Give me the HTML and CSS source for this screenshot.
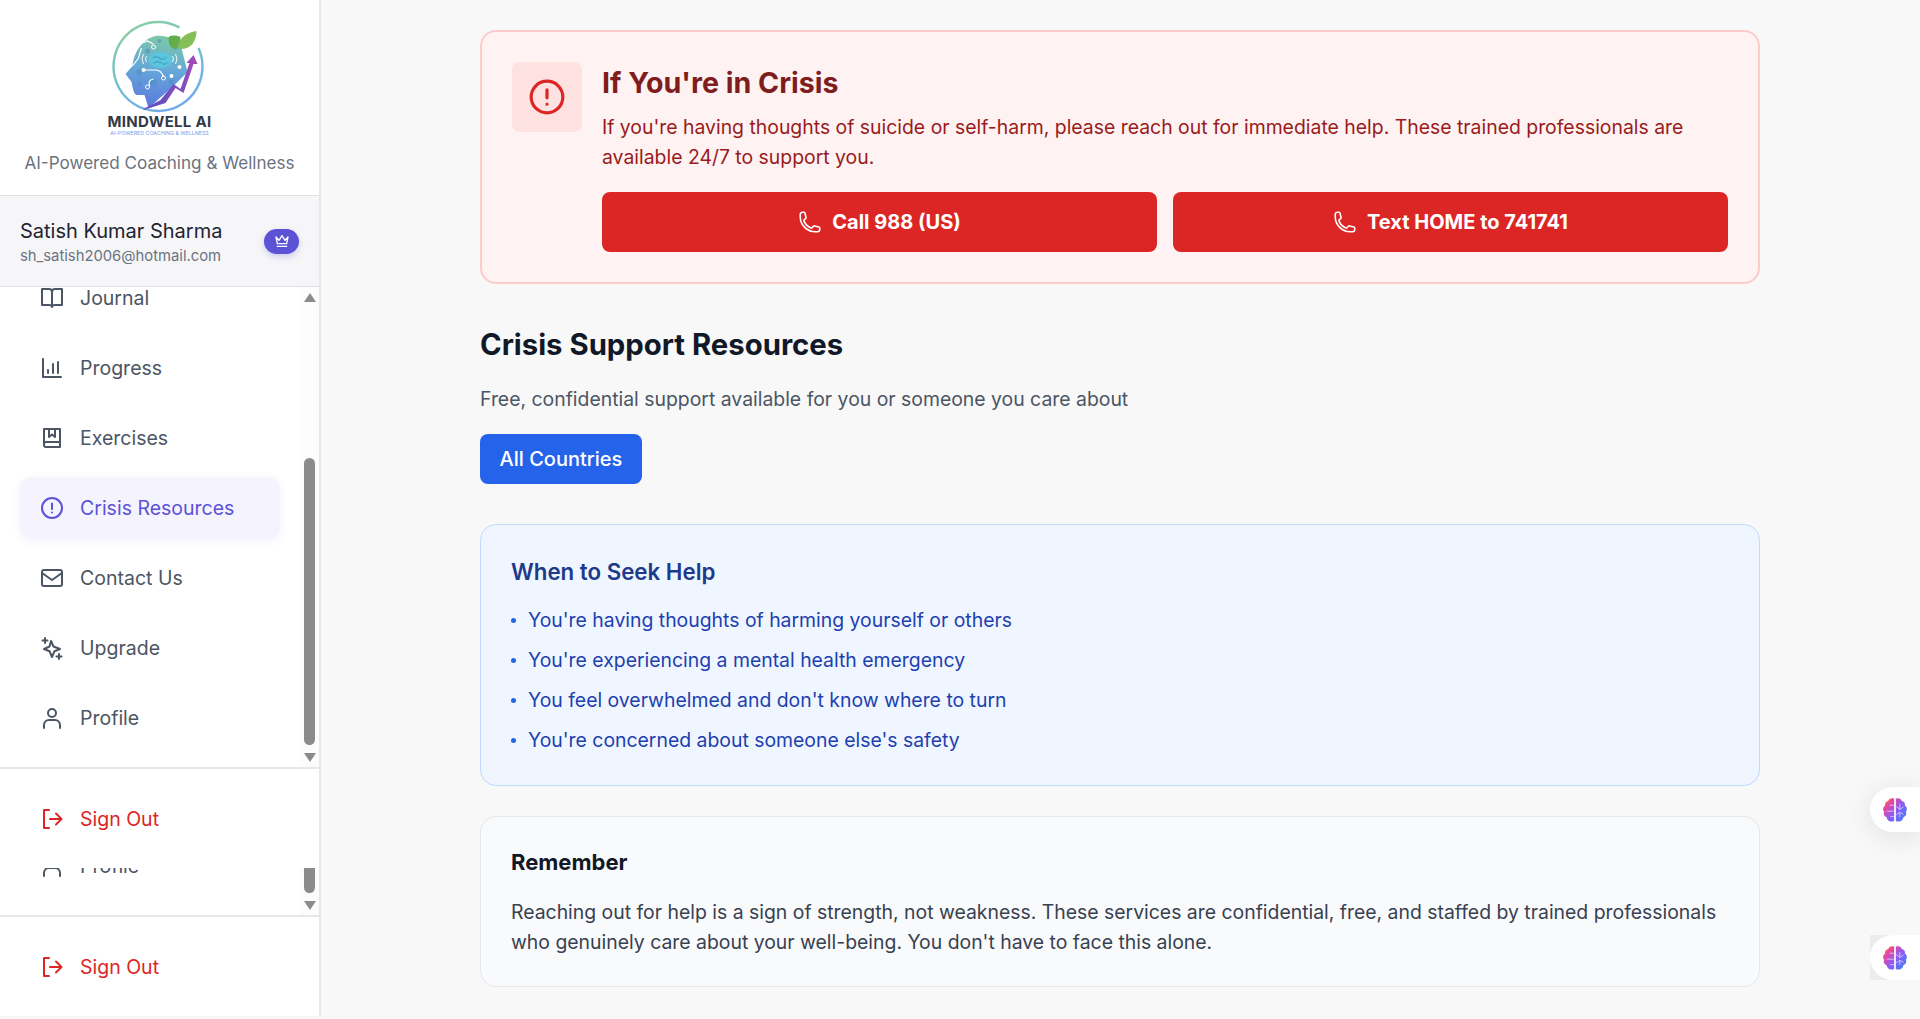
FILE: index.html
```html
<!DOCTYPE html>
<html lang="en">
<head>
<meta charset="utf-8">
<title>Crisis Resources</title>
<link rel="stylesheet" href="styles.css">
</head>
<body>
<div class="app">
  <aside class="sidebar">
    <header class="brand">
      <svg class="logo" viewBox="1.500 0 110 96" width="110" height="96" aria-hidden="true">
        <defs>
          <linearGradient id="ring" x1="0.2" y1="0" x2="0.7" y2="1"><stop offset="0" stop-color="#8fd0a0"/><stop offset="0.5" stop-color="#6fc0d0"/><stop offset="1" stop-color="#70a8ee"/></linearGradient>
          <linearGradient id="head" x1="0.5" y1="0" x2="0.4" y2="1"><stop offset="0" stop-color="#7cc8a8"/><stop offset="0.45" stop-color="#66a8d8"/><stop offset="1" stop-color="#5a78e0"/></linearGradient>
          <linearGradient id="arrow" x1="0" y1="1" x2="1" y2="0"><stop offset="0" stop-color="#5a4fc0"/><stop offset="1" stop-color="#a44bb8"/></linearGradient>
        </defs>
        <path d="M76 7.500A44.500 44.500 0 1 0 95 28" fill="none" stroke="url(#ring)" stroke-width="2.400"/>
        <path d="M52 16C62 15 72 18 78 28L84 52 70 66 45 88 41 75 33 75C30 73 30 70 29 67L28 62 22 54 29 46C30 34 38 19 52 16Z" fill="url(#head)"/>
        <g fill="#4f8cc0" opacity=".55"><circle cx="56" cy="21" r="2"/><circle cx="44" cy="31" r="2.500"/><circle cx="72" cy="28" r="2"/><circle cx="36" cy="52" r="3"/><circle cx="50" cy="62" r="3.500"/><circle cx="68" cy="62" r="2.500"/><circle cx="36" cy="64" r="2.500"/></g>
        <ellipse cx="57" cy="40" rx="12" ry="8" fill="#5cc4dc"/>
        <path d="M49 38q4-3 7 0t7-1M50 43q5-3 8 0t6-1" fill="none" stroke="#2f8fb8" stroke-width="0.8"/>
        <path d="M40 34q-3 5 0 10M43 36q-2 3 0 6M72 34q3 5 0 10M69 36q2 3 0 6" fill="none" stroke="#fff" stroke-width="0.9"/>
        <path d="M38 28l-3 10-6 8M40 50h12q6 0 8 7M46 66q-2-6 4-7M36 24l8-3 6 3" fill="none" stroke="#fff" stroke-width="1.200"/>
        <circle cx="40" cy="50" r="2" fill="#fff"/><circle cx="50" cy="27" r="2" fill="none" stroke="#fff"/><circle cx="60" cy="58" r="2" fill="none" stroke="#fff"/><circle cx="76" cy="47" r="2" fill="#fff"/><circle cx="68" cy="56" r="2" fill="#fff"/><circle cx="44" cy="67" r="2" fill="none" stroke="#fff"/>
        <path d="M40 89L57 80 70 64 77 69 86 43 83 43 90 35 94 44 90 44 80 73 72 68 62 83 40 90Z" fill="url(#arrow)"/>
        <path d="M65 18C66 15 71 15 77 17 77 24 74 29 71 29 67 28 65 24 65 18Z" fill="#63ad4a"/>
        <path d="M75 29C74 20 80 13 93 11 93 22 87 30 75 29Z" fill="#84bf5a"/>
      </svg>
      <div class="logo-name">MINDWELL AI</div>
      <div class="logo-sub">AI-POWERED COACHING &amp; WELLNESS</div>
      <p class="tagline">AI-Powered Coaching &amp; Wellness</p>
    </header>

    <section class="user">
      <div class="user-info">
        <div class="user-name">Satish Kumar Sharma</div>
        <div class="user-mail">sh_satish2006@hotmail.com</div>
      </div>
      <span class="badge">
        <svg viewBox="0 0 24 24" width="16" height="16" fill="none" stroke="#fff" stroke-width="2" stroke-linecap="round" stroke-linejoin="round"><path d="M3 6l4.500 5L12 4l4.500 7L21 6l-2 10H5z"/><path d="M5 20h14"/></svg>
      </span>
    </section>

    <div class="nav-wrap">
      <nav class="nav">
        <a class="nav-item"><svg class="ico" viewBox="0 0 24 24"><path d="M2 3h7a3 3 0 0 1 3 3 3 3 0 0 1 3-3h7v16h-7c-1.500 0-3 .5-3 2 0-1.500-1.500-2-3-2H2zM12 6v15"/></svg>Journal</a>
        <a class="nav-item"><svg class="ico" viewBox="0 0 24 24"><path d="M3 3v18h18M8 17v-3M13 17V8M18 17V6"/></svg>Progress</a>
        <a class="nav-item"><svg class="ico" viewBox="0 0 24 24"><path d="M4 3h16v18H6a2 2 0 0 1-2-2zM4 18a2 2 0 0 1 2-2h14M9 3v8l3-2.500L15 11V3"/></svg>Exercises</a>
        <a class="nav-item active"><svg class="ico" viewBox="0 0 24 24"><circle cx="12" cy="12" r="10"/><path d="M12 7.500v5.500M12 16.500v.1"/></svg>Crisis Resources</a>
        <a class="nav-item"><svg class="ico" viewBox="0 0 24 24"><rect x="2" y="4" width="20" height="16" rx="2"/><path d="M2 7l10 7 10-7"/></svg>Contact Us</a>
        <a class="nav-item"><svg class="ico" viewBox="0 0 24 24"><path d="M11 5l2.500 5.500L20 13l-5.500 2.200L12 21l-2.500-5.800L4 13l5.500-2.500zM5 2v5M2.500 4.500h5M19 18v5M16.500 20.500h5"/></svg>Upgrade</a>
        <a class="nav-item"><svg class="ico" viewBox="0 0 24 24"><circle cx="12" cy="7" r="4"/><path d="M4 22v-3a5 5 0 0 1 5-5h6a5 5 0 0 1 5 5v3"/></svg>Profile</a>
      </nav>
      <div class="scrollbar">
        <span class="arrow up"></span>
        <span class="thumb thumb-a"></span>
        <span class="arrow down"></span>
      </div>
    </div>

    <div class="signout">
      <a class="nav-item danger"><svg class="ico" viewBox="0 0 24 24"><path d="M9 3H4v18h5M10 12h11M16 6.500l5.500 5.500-5.500 5.500"/></svg>Sign Out</a>
    </div>

    <div class="nav-wrap ghost">
      <nav class="nav ghost-nav">
        <a class="nav-item"><svg class="ico" viewBox="0 0 24 24"><circle cx="12" cy="7" r="4"/><path d="M4 22v-3a5 5 0 0 1 5-5h6a5 5 0 0 1 5 5v3"/></svg>Profile</a>
      </nav>
      <div class="scrollbar ghost-bar">
        <span class="thumb thumb-b"></span>
        <span class="arrow down"></span>
      </div>
    </div>

    <div class="signout last">
      <a class="nav-item danger"><svg class="ico" viewBox="0 0 24 24"><path d="M9 3H4v18h5M10 12h11M16 6.500l5.500 5.500-5.500 5.500"/></svg>Sign Out</a>
    </div>
  </aside>

  <main class="main">
    <div class="content">
      <section class="crisis">
        <div class="crisis-icon">
          <svg viewBox="0 0 24 24" width="38" height="38" fill="none" stroke="#dc2626" stroke-width="2" stroke-linecap="round"><circle cx="12" cy="12" r="10"/><path d="M12 7.500v5M12 16.500v.1"/></svg>
        </div>
        <div class="crisis-body">
          <h2 class="crisis-title">If You're in Crisis</h2>
          <p class="crisis-text">If you're having thoughts of suicide or self-harm, please reach out for immediate help. These trained professionals are available 24/7 to support you.</p>
          <div class="crisis-actions">
            <a class="call"><svg class="phone" viewBox="0 0 24 24"><path d="M2.250 6.750c0 8.284 6.716 15 15 15h2.250a2.250 2.250 0 002.250-2.250v-1.372c0-.516-.351-.966-.852-1.091l-4.423-1.106c-.44-.11-.902.055-1.173.417l-.97 1.293c-.282.376-.769.542-1.210.38a12.035 12.035 0 01-7.143-7.143c-.162-.441.004-.928.38-1.210l1.293-.97c.363-.271.527-.734.417-1.173L6.963 3.102a1.125 1.125 0 00-1.091-.852H4.500A2.250 2.250 0 002.250 4.500v2.250z"/></svg>Call 988 (US)</a>
            <a class="call"><svg class="phone" viewBox="0 0 24 24"><path d="M2.250 6.750c0 8.284 6.716 15 15 15h2.250a2.250 2.250 0 002.250-2.250v-1.372c0-.516-.351-.966-.852-1.091l-4.423-1.106c-.44-.11-.902.055-1.173.417l-.97 1.293c-.282.376-.769.542-1.210.38a12.035 12.035 0 01-7.143-7.143c-.162-.441.004-.928.38-1.210l1.293-.97c.363-.271.527-.734.417-1.173L6.963 3.102a1.125 1.125 0 00-1.091-.852H4.500A2.250 2.250 0 002.250 4.500v2.250z"/></svg>Text HOME to 741741</a>
          </div>
        </div>
      </section>

      <h1 class="section-title">Crisis Support Resources</h1>
      <p class="section-sub">Free, confidential support available for you or someone you care about</p>
      <button class="filter">All Countries</button>

      <section class="help">
        <h3 class="help-title">When to Seek Help</h3>
        <ul class="help-list">
          <li>You're having thoughts of harming yourself or others</li>
          <li>You're experiencing a mental health emergency</li>
          <li>You feel overwhelmed and don't know where to turn</li>
          <li>You're concerned about someone else's safety</li>
        </ul>
      </section>

      <section class="remember">
        <h3 class="remember-title">Remember</h3>
        <p class="remember-text">Reaching out for help is a sign of strength, not weakness. These services are confidential, free, and staffed by trained professionals who genuinely care about your well-being. You don't have to face this alone.</p>
      </section>
    </div>
  </main>
</div>

<div class="float f1"><span class="pill"><svg class="brain" viewBox="2 2 20 20"><use href="#brain"/></svg></span></div>
<div class="float f2"><span class="pill"><svg class="brain" viewBox="2 2 20 20"><use href="#brain"/></svg></span></div>
<svg class="defs" width="0" height="0" aria-hidden="true">
  <defs>
    <linearGradient id="bg" gradientUnits="userSpaceOnUse" x1="3" y1="3" x2="22" y2="20"><stop offset="0" stop-color="#f59e0b"/><stop offset="0.2" stop-color="#ec4899"/><stop offset="0.55" stop-color="#8b5cf6"/><stop offset="1" stop-color="#3b82f6"/></linearGradient>
    <g id="brain">
      <path d="M11.300 2.500C9 1.500 6.800 2.500 6.300 4.500 4.300 4.800 3.300 6.500 3.800 8.300 2 9.300 1.500 12 3 13.500c-1 1.800 0 4 2 4.500.3 2.300 2.300 3.800 4 3.500.9.300 1.800 0 2.300-.6zM12.700 2.500c2.300-1 4.500 0 5 2 2 .3 3 2 2.500 3.800 1.800 1 2.300 3.700.8 5.200 1 1.800 0 4-2 4.500-.3 2.300-2.300 3.800-4 3.500-.9.300-1.800 0-2.300-.6z" fill="url(#bg)"/>
      <path d="M11 8H7.500M11 13H5M11 17.500H8M13 9l3 2.500 3-2M16 11.500V7M13 16l3-2 3 1.500M16 14v4" fill="none" stroke="#fff" stroke-width=".8" opacity=".6"/>
    </g>
  </defs>
</svg>
</body>
</html>
```

FILE: styles.css
```css
* { box-sizing: border-box; }
html, body { margin: 0; height: 100%; }
body {
  font-family: Inter, "Liberation Sans", sans-serif;
  background: #f8f8f9;
  color: #111827;
  overflow: hidden;
}
p, h1, h2, h3, ul { margin: 0; padding: 0; }

.app { display: flex; height: 1019px; }

/* sidebar */
.sidebar {
  width: 321px;
  height: 1016px;
  flex: none;
  background: #fff;
  border-right: 2px solid #e5e7eb;
  display: flex;
  flex-direction: column;
  overflow: hidden;
}
.brand {
  height: 196px;
  flex: none;
  display: flex;
  flex-direction: column;
  align-items: center;
  padding-top: 20px;
  border-bottom: 1px solid #e0e0e3;
}
.logo { display: block; width: 110px; height: 96px; }
.logo-name {
  font-size: 15px;
  line-height: 12px;
  letter-spacing: .3px;
  font-weight: 700;
  color: #323a48;
  white-space: nowrap;
}
.logo-sub {
  font-size: 5.300px;
  line-height: 6px;
  color: #7aa0e8;
  margin-top: 2px;
  white-space: nowrap;
}
.tagline {
  font-size: 17.100px;
  line-height: 24px;
  color: #6b7280;
  margin-top: 15px;
  white-space: nowrap;
}
.user {
  height: 91px;
  flex: none;
  background: #f6f6f8;
  border-bottom: 1px solid #e0e0e3;
  display: flex;
  align-items: center;
  justify-content: space-between;
  padding: 0 20px;
}
.user-info { padding-top: 2px; }
.user-name { font-size: 20px; line-height: 27px; color: #1f2430; }
.user-mail { font-size: 14.800px; line-height: 22px; color: #6b7280; }
.badge {
  width: 35px;
  height: 25px;
  border-radius: 13px;
  background: #5b52d6;
  box-shadow: 0 3px 6px rgba(91, 82, 214, .25);
  display: flex;
  align-items: center;
  justify-content: center;
}

.nav-wrap {
  display: flex;
  height: 482px;
  flex: none;
  overflow: hidden;
  border-bottom: 2px solid #e5e7eb;
}
.nav {
  flex: 1;
  margin-top: -20px;
  padding: 0 20px;
  display: flex;
  flex-direction: column;
  gap: 8px;
}
.nav-item {
  height: 62px;
  flex: none;
  display: flex;
  align-items: center;
  gap: 16px;
  padding: 0 20px;
  border-radius: 12px;
  font-size: 19.500px;
  color: #4b5563;
  white-space: nowrap;
}
.ico {
  width: 24px;
  height: 24px;
  flex: none;
  fill: none;
  stroke: currentColor;
  stroke-width: 2;
  stroke-linecap: round;
  stroke-linejoin: round;
}
.nav-item.active {
  background: #f4f3fe;
  color: #5b52d6;
  box-shadow: 0 2px 8px rgba(91, 82, 214, .08);
}
.nav-item.danger { color: #dc2626; }

.scrollbar {
  width: 19px;
  flex: none;
  background: #fcfcfc;
  display: flex;
  flex-direction: column;
  align-items: center;
  padding-top: 6px;
}
.arrow { width: 0; height: 0; flex: none; border-left: 6.500px solid transparent; border-right: 6.500px solid transparent; }
.arrow.up { border-bottom: 9px solid #8b8b8b; }
.arrow.down { border-top: 9px solid #8b8b8b; margin-top: 8px; }
.thumb { width: 11px; flex: none; background: #8b8b8b; border-radius: 6px; }
.thumb-a { height: 287px; margin-top: 156px; }
.thumb-b { height: 25px; border-radius: 0 0 6px 6px; }

.signout { height: 99px; flex: none; padding: 19px 20px 0; }
.signout.last { height: 99px; }

.nav-wrap.ghost { height: 49px; }
.ghost-nav { margin-top: -33px; }
.ghost-bar { padding-top: 0; }

/* main */
.main { flex: 1; min-width: 0; padding: 30px 159px 0; }
.content { width: 1280px; }
.crisis {
  height: 254px;
  display: flex;
  gap: 20px;
  padding: 30px;
  background: #fef2f2;
  border: 2px solid #fecaca;
  border-radius: 16px;
}
.crisis-icon {
  width: 70px;
  height: 70px;
  flex: none;
  background: #fee2e2;
  border-radius: 8px;
  display: flex;
  align-items: center;
  justify-content: center;
}
.crisis-body { flex: 1; min-width: 0; }
.crisis-title { font-size: 28.600px; line-height: 42px; font-weight: 700; color: #7f1d1d; }
.crisis-text { font-size: 19.400px; line-height: 30px; color: #991b1b; margin-top: 8px; }
.crisis-actions { display: flex; gap: 16px; margin-top: 20px; }
.call {
  flex: 1;
  height: 60px;
  background: #dc2626;
  border-radius: 8px;
  color: #fff;
  font-size: 20px;
  font-weight: 700;
  display: flex;
  align-items: center;
  justify-content: center;
  gap: 10px;
}
.phone { width: 24px; height: 24px; fill: none; stroke: #fff; stroke-width: 1.600; stroke-linejoin: round; }

.section-title { font-size: 29.300px; line-height: 40px; font-weight: 700; color: #111827; margin-top: 41px; }
.section-sub { font-size: 19.400px; line-height: 28px; color: #4b5563; margin-top: 20px; }
.filter {
  display: block;
  width: 162px;
  height: 50px;
  margin-top: 21px;
  border: 0;
  border-radius: 8px;
  background: #2563eb;
  color: #fff;
  font: 500 20px Inter, "Liberation Sans", sans-serif;
}
.help {
  height: 262px;
  margin-top: 40px;
  padding: 30px;
  background: #eff6ff;
  border: 1px solid #bfdbfe;
  border-radius: 16px;
}
.help-title { font-size: 22.300px; line-height: 34px; font-weight: 600; color: #1e3a8a; }
.help-list { list-style: none; margin-top: 17px; display: flex; flex-direction: column; gap: 12px; }
.help-list li {
  display: flex;
  align-items: center;
  gap: 12px;
  font-size: 19.400px;
  line-height: 28px;
  color: #1e40af;
}
.help-list li::before {
  content: "";
  width: 5px;
  height: 5px;
  border-radius: 50%;
  background: #2563eb;
  flex: none;
}
.remember {
  height: 171px;
  margin-top: 30px;
  padding: 30px;
  background: #f9fafb;
  border: 1px solid #e5e7eb;
  border-radius: 16px;
}
.remember-title { font-size: 22px; line-height: 30px; font-weight: 700; color: #111827; }
.remember-text { font-size: 19.400px; line-height: 30px; color: #374151; margin-top: 20px; }

/* floating widgets */
.float {
  position: fixed;
  right: 0;
  display: flex;
  justify-content: flex-end;
  overflow: hidden;
}
.f1 { top: 727px; width: 120px; height: 140px; padding-top: 60px; }
.f2 { top: 935px; width: 50px; height: 45px; background: #ececec; }
.pill {
  width: 50px;
  height: 45px;
  padding-left: 13px;
  background: #fff;
  border-radius: 23px 0 0 23px;
  display: flex;
  align-items: center;
}
.f1 .pill { box-shadow: 0 4px 28px rgba(0, 0, 0, .1); }
.brain { width: 24px; height: 24px; }
.defs { position: absolute; }
```
